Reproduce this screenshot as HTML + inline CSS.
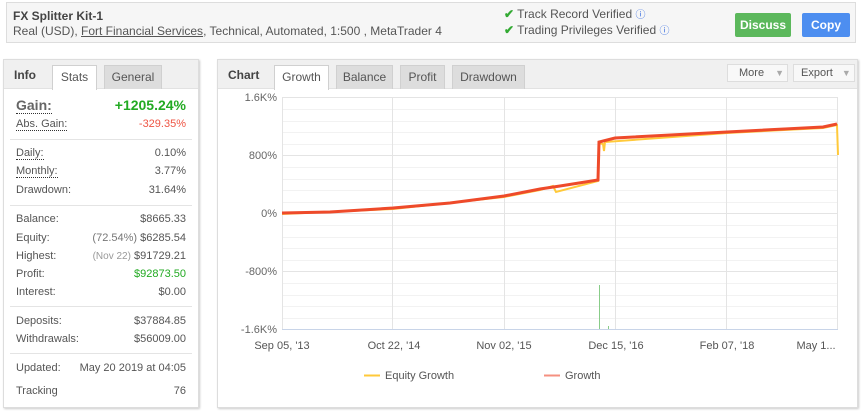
<!DOCTYPE html>
<html><head><meta charset="utf-8"><style>
*{box-sizing:border-box;margin:0;padding:0}
body{width:862px;height:411px;background:#fff;font-family:"Liberation Sans",Arial,sans-serif;font-size:11px;color:#555;position:relative;overflow:hidden}
.abs{position:absolute}
.hdr{left:6px;top:2px;width:850px;height:41px;border:1px solid #ddd;background:#f6f6f6}
.panel{border:1px solid #ddd;background:#fff;box-shadow:1px 1px 2px #ccc}
.tabbar{position:absolute;left:0;top:0;right:0;height:29px;background:#f0f0f0;border-bottom:1px solid #e2e2e2}
.tab{position:absolute;top:5px;height:24px;background:#ddd;border:1px solid #d0d0d0;border-bottom:none;text-align:center;line-height:23px;font-size:12px;color:#555}
.tab.on{background:#fff;height:25px}
.lbl{position:absolute;left:12px;font-size:11px;color:#555}
.val{position:absolute;right:12px;font-size:11px;color:#555;text-align:right}
.dot{border-bottom:1px dotted #333}
.sep{position:absolute;left:6px;right:6px;height:1px;background:#e4e4e4}
.btn{position:absolute;top:10px;height:24px;color:#fff;font-weight:bold;font-size:12px;text-align:center;line-height:24px;border-radius:2px}
</style></head><body>
<div class="abs hdr">
 <div class="abs" style="left:6px;top:6px;font-weight:bold;font-size:12px;color:#444">FX Splitter Kit-1</div>
 <div class="abs" style="left:6px;top:21px;font-size:12px;color:#555;white-space:nowrap">Real (USD), <span style="text-decoration:underline">Fort Financial Services</span>, Technical, Automated, 1:500 , MetaTrader 4</div>
 <div class="abs" style="left:497px;top:3px;font-size:12px;color:#555;white-space:nowrap"><span style="color:#3a3;font-weight:bold">✔</span> Track Record Verified <span style="color:#3a6ee0;font-size:10px">ⓘ</span></div>
 <div class="abs" style="left:497px;top:19px;font-size:12px;color:#555;white-space:nowrap"><span style="color:#3a3;font-weight:bold">✔</span> Trading Privileges Verified <span style="color:#3a6ee0;font-size:10px">ⓘ</span></div>
 <div class="btn" style="left:728px;width:56px;background:#5cb85c">Discuss</div>
 <div class="btn" style="left:795px;width:48px;background:#4d8ef0">Copy</div>
</div>

<div class="abs panel" style="left:3px;top:59px;width:196px;height:349px">
 <div class="tabbar"></div>
 <div class="abs" style="left:10px;top:8px;font-weight:bold;font-size:12px;color:#444">Info</div>
 <div class="tab on" style="left:48px;width:45px">Stats</div>
 <div class="tab" style="left:100px;width:58px">General</div>
 <div class="lbl" style="top:37px;font-size:14px;font-weight:bold;color:#666"><span class="dot">Gain:</span></div>
 <div class="val" style="top:37px;font-size:14px;font-weight:bold;color:#2a2">+1205.24%</div>
 <div class="lbl" style="top:58px"><span class="dot">Abs. Gain:</span></div>
 <div class="val" style="top:58px;color:#e54">-329.35%</div>
 <div class="sep" style="top:79px"></div>
 <div class="lbl" style="top:87px"><span class="dot">Daily:</span></div><div class="val" style="top:87px">0.10%</div>
 <div class="lbl" style="top:105px"><span class="dot">Monthly:</span></div><div class="val" style="top:105px">3.77%</div>
 <div class="lbl" style="top:124px">Drawdown:</div><div class="val" style="top:124px">31.64%</div>
 <div class="sep" style="top:145px"></div>
 <div class="lbl" style="top:153px">Balance:</div><div class="val" style="top:153px">$8665.33</div>
 <div class="lbl" style="top:172px">Equity:</div><div class="val" style="top:172px"><span style="color:#777">(72.54%)</span> $6285.54</div>
 <div class="lbl" style="top:190px">Highest:</div><div class="val" style="top:190px"><span style="color:#999;font-size:10px">(Nov 22)</span> $91729.21</div>
 <div class="lbl" style="top:208px">Profit:</div><div class="val" style="top:208px;color:#2a2">$92873.50</div>
 <div class="lbl" style="top:226px">Interest:</div><div class="val" style="top:226px">$0.00</div>
 <div class="sep" style="top:246px"></div>
 <div class="lbl" style="top:255px">Deposits:</div><div class="val" style="top:255px">$37884.85</div>
 <div class="lbl" style="top:273px">Withdrawals:</div><div class="val" style="top:273px">$56009.00</div>
 <div class="sep" style="top:293px"></div>
 <div class="lbl" style="top:302px">Updated:</div><div class="val" style="top:302px">May 20 2019 at 04:05</div>
 <div class="lbl" style="top:325px">Tracking</div><div class="val" style="top:325px">76</div>
</div>

<div class="abs panel" style="left:217px;top:59px;width:641px;height:349px">
 <div class="tabbar"></div>
 <div class="abs" style="left:10px;top:8px;font-weight:bold;font-size:12px;color:#444">Chart</div>
 <div class="tab on" style="left:56px;width:55px">Growth</div>
 <div class="tab" style="left:118px;width:57px">Balance</div>
 <div class="tab" style="left:182px;width:45px">Profit</div>
 <div class="tab" style="left:234px;width:73px">Drawdown</div>
 <div class="abs" style="left:509px;top:4px;width:61px;height:18px;border:1px solid #ddd;background:#f8f8f8;font-size:11px;line-height:16px;padding-left:11px">More <span style="color:#aaa;font-size:9px;margin-left:8px">▼</span></div>
 <div class="abs" style="left:575px;top:4px;width:62px;height:18px;border:1px solid #ddd;background:#f8f8f8;font-size:11px;line-height:16px;padding-left:7px">Export <span style="color:#aaa;font-size:9px;margin-left:6px">▼</span></div>
</div>

<svg class="abs" style="left:0;top:0" width="862" height="411">
 <g stroke="#f2f2f2" stroke-width="1">
  <line x1="282" y1="109.5" x2="838" y2="109.5"/><line x1="282" y1="121.5" x2="838" y2="121.5"/><line x1="282" y1="132.5" x2="838" y2="132.5"/><line x1="282" y1="144.5" x2="838" y2="144.5"/>
  <line x1="282" y1="167.5" x2="838" y2="167.5"/><line x1="282" y1="179.5" x2="838" y2="179.5"/><line x1="282" y1="190.5" x2="838" y2="190.5"/><line x1="282" y1="202.5" x2="838" y2="202.5"/>
  <line x1="282" y1="225.5" x2="838" y2="225.5"/><line x1="282" y1="237.5" x2="838" y2="237.5"/><line x1="282" y1="248.5" x2="838" y2="248.5"/><line x1="282" y1="260.5" x2="838" y2="260.5"/>
  <line x1="282" y1="283.5" x2="838" y2="283.5"/><line x1="282" y1="295.5" x2="838" y2="295.5"/><line x1="282" y1="306.5" x2="838" y2="306.5"/><line x1="282" y1="318.5" x2="838" y2="318.5"/>
 </g>
 <g stroke="#e4e4e4" stroke-width="1">
  <line x1="282" y1="97.5" x2="838" y2="97.5"/><line x1="282" y1="155.5" x2="838" y2="155.5"/><line x1="282" y1="213.5" x2="838" y2="213.5"/><line x1="282" y1="271.5" x2="838" y2="271.5"/>
  <line x1="282.5" y1="97" x2="282.5" y2="329"/><line x1="392.5" y1="97" x2="392.5" y2="329"/><line x1="504.5" y1="97" x2="504.5" y2="329"/><line x1="615.5" y1="97" x2="615.5" y2="329"/><line x1="726.5" y1="97" x2="726.5" y2="329"/><line x1="837.5" y1="97" x2="837.5" y2="329"/>
 </g>
 <line x1="282" y1="329.5" x2="838" y2="329.5" stroke="#c8d4e8"/>
 <line x1="599.5" y1="285" x2="599.5" y2="329" stroke="#8c8"/>
 <line x1="608.5" y1="326" x2="608.5" y2="329" stroke="#8c8"/>
 <g font-size="11" fill="#666" text-anchor="end">
  <text x="277" y="101">1.6K%</text><text x="277" y="159">800%</text><text x="277" y="217">0%</text><text x="277" y="275">-800%</text><text x="277" y="333">-1.6K%</text>
 </g>
 <g font-size="11" fill="#555" text-anchor="middle">
  <text x="282" y="349">Sep 05, '13</text><text x="394" y="349">Oct 22, '14</text><text x="504" y="349">Nov 02, '15</text><text x="616" y="349">Dec 15, '16</text><text x="727" y="349">Feb 07, '18</text><text x="816" y="349">May 1...</text>
 </g>
 <polyline fill="none" stroke="#ffc93a" stroke-width="2" points="282,214 393,209 504,197 540,190 553,186 556,192 598,181 599,143 603,144 604,151 605,142 727,133 823,128 837,125 838,155"/>
 <polyline fill="none" stroke="#ee4a2a" stroke-width="3" points="282,213 330,212 393,208 450,203 504,196 540,189 560,186 598,180 599,142 615,138 727,132 823,127 837,124"/>
 <line x1="364" y1="375.5" x2="380" y2="375.5" stroke="#ffc93a" stroke-width="2"/>
 <text x="385" y="379" font-size="11" fill="#555">Equity Growth</text>
 <line x1="544" y1="375.5" x2="560" y2="375.5" stroke="#f59080" stroke-width="2"/>
 <text x="565" y="379" font-size="11" fill="#555">Growth</text>
</svg>
</body></html>
